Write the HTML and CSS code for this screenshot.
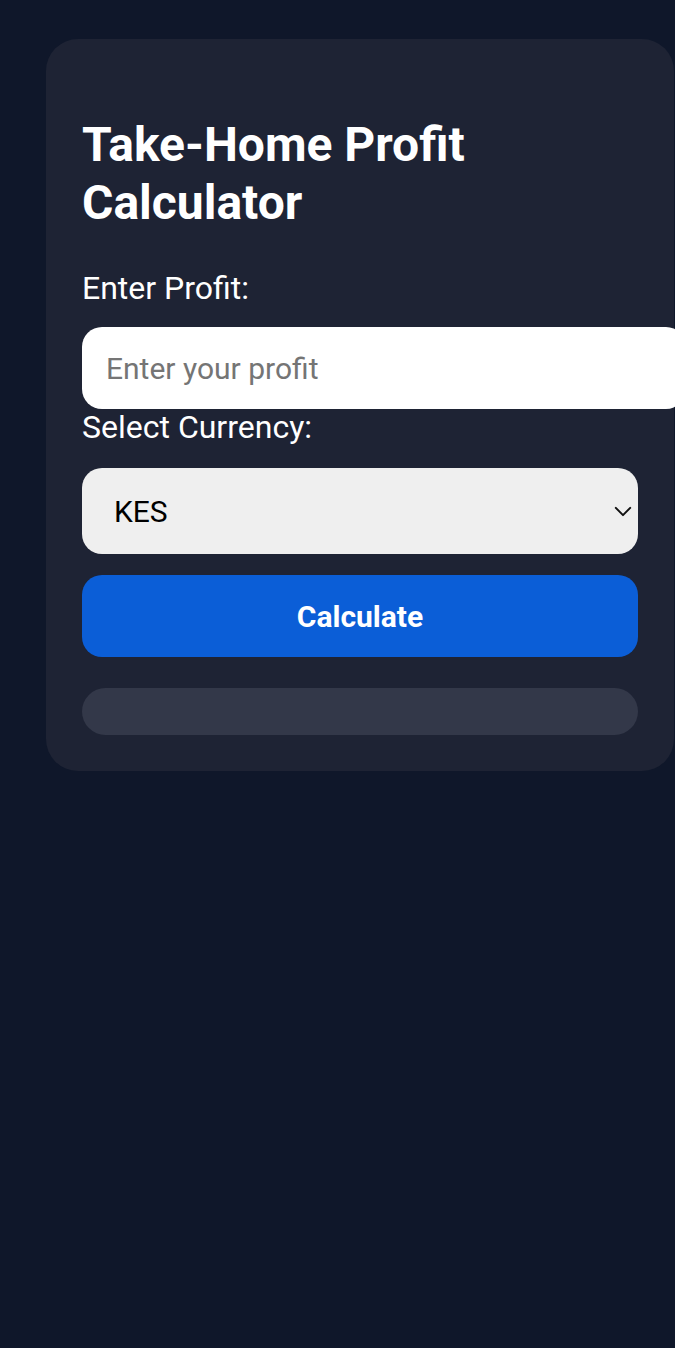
FILE: index.html
```html
<!DOCTYPE html>
<html lang="en">
<head>
<meta charset="utf-8">
<title>Take-Home Profit Calculator</title>
<link rel="stylesheet" href="styles.css">
</head>
<body>
<div class="card">
  <h1 class="title">Take-Home Profit Calculator</h1>
  <label class="label label-first" for="profit">Enter Profit:</label>
  <input class="input" id="profit" type="number" placeholder="Enter your profit">
  <label class="label label-second" for="currency">Select Currency:</label>
  <div class="select-wrap">
    <select class="select" id="currency">
      <option>KES</option>
      <option>USD</option>
    </select>
    <svg class="chevron" viewBox="0 0 20 12" width="18" height="11"><path d="M2 2 L10 10 L18 2" fill="none" stroke="#111" stroke-width="2.2" stroke-linecap="round" stroke-linejoin="round"/></svg>
  </div>
  <button class="button" type="button">Calculate</button>
  <div class="result"></div>
</div>
</body>
</html>
```
FILE: styles.css
```css
html, body {
  margin: 0;
  background: #0f172a;
}
body {
  padding: 39px 0 0 46px;
  font-family: Roboto, "Liberation Sans", sans-serif;
  overflow: hidden;
  min-height: 1348px;
  box-sizing: border-box;
}
.card {
  width: 628px;
  box-sizing: border-box;
  background: #1e2334;
  border-radius: 32px;
  padding: 36px;
}
.title {
  margin: 41px 0 41px;
  font-size: 48px;
  line-height: 57.5px;
  font-weight: 700;
  color: #ffffff;
}
.label {
  display: block;
  font-size: 32px;
  line-height: 33px;
  color: #ffffff;
}
.label-first {
  margin-bottom: 22px;
}
.label-second {
  margin-top: 2px;
  margin-bottom: 24px;
}
.input {
  display: block;
  width: 100%;
  height: 82px;
  box-sizing: content-box;
  padding: 0 24px;
  margin: 0;
  border: none;
  border-radius: 20px;
  background: #ffffff;
  font-family: Roboto, "Liberation Sans", sans-serif;
  font-size: 30px;
  color: #111;
  outline: none;
  -moz-appearance: textfield;
}
.input::-webkit-outer-spin-button,
.input::-webkit-inner-spin-button {
  -webkit-appearance: none;
  margin: 0;
}
.input::placeholder {
  color: #757575;
}
.select-wrap {
  position: relative;
  margin-bottom: 21px;
}
.select {
  display: block;
  width: 100%;
  height: 86px;
  padding: 0 32px;
  border: none;
  border-radius: 20px;
  background: #efefef;
  font-family: Roboto, "Liberation Sans", sans-serif;
  font-size: 30px;
  color: #000;
  -webkit-appearance: none;
  appearance: none;
  outline: none;
}
.chevron {
  position: absolute;
  right: 6px;
  top: 38px;
  pointer-events: none;
}
.button {
  display: block;
  width: 100%;
  height: 82px;
  border: none;
  border-radius: 20px;
  background: #0b5ed7;
  color: #ffffff;
  font-family: Roboto, "Liberation Sans", sans-serif;
  font-size: 30px;
  font-weight: 700;
  margin-bottom: 31px;
  padding: 0;
}
.result {
  height: 47px;
  border-radius: 24px;
  background: #333849;
}
```
